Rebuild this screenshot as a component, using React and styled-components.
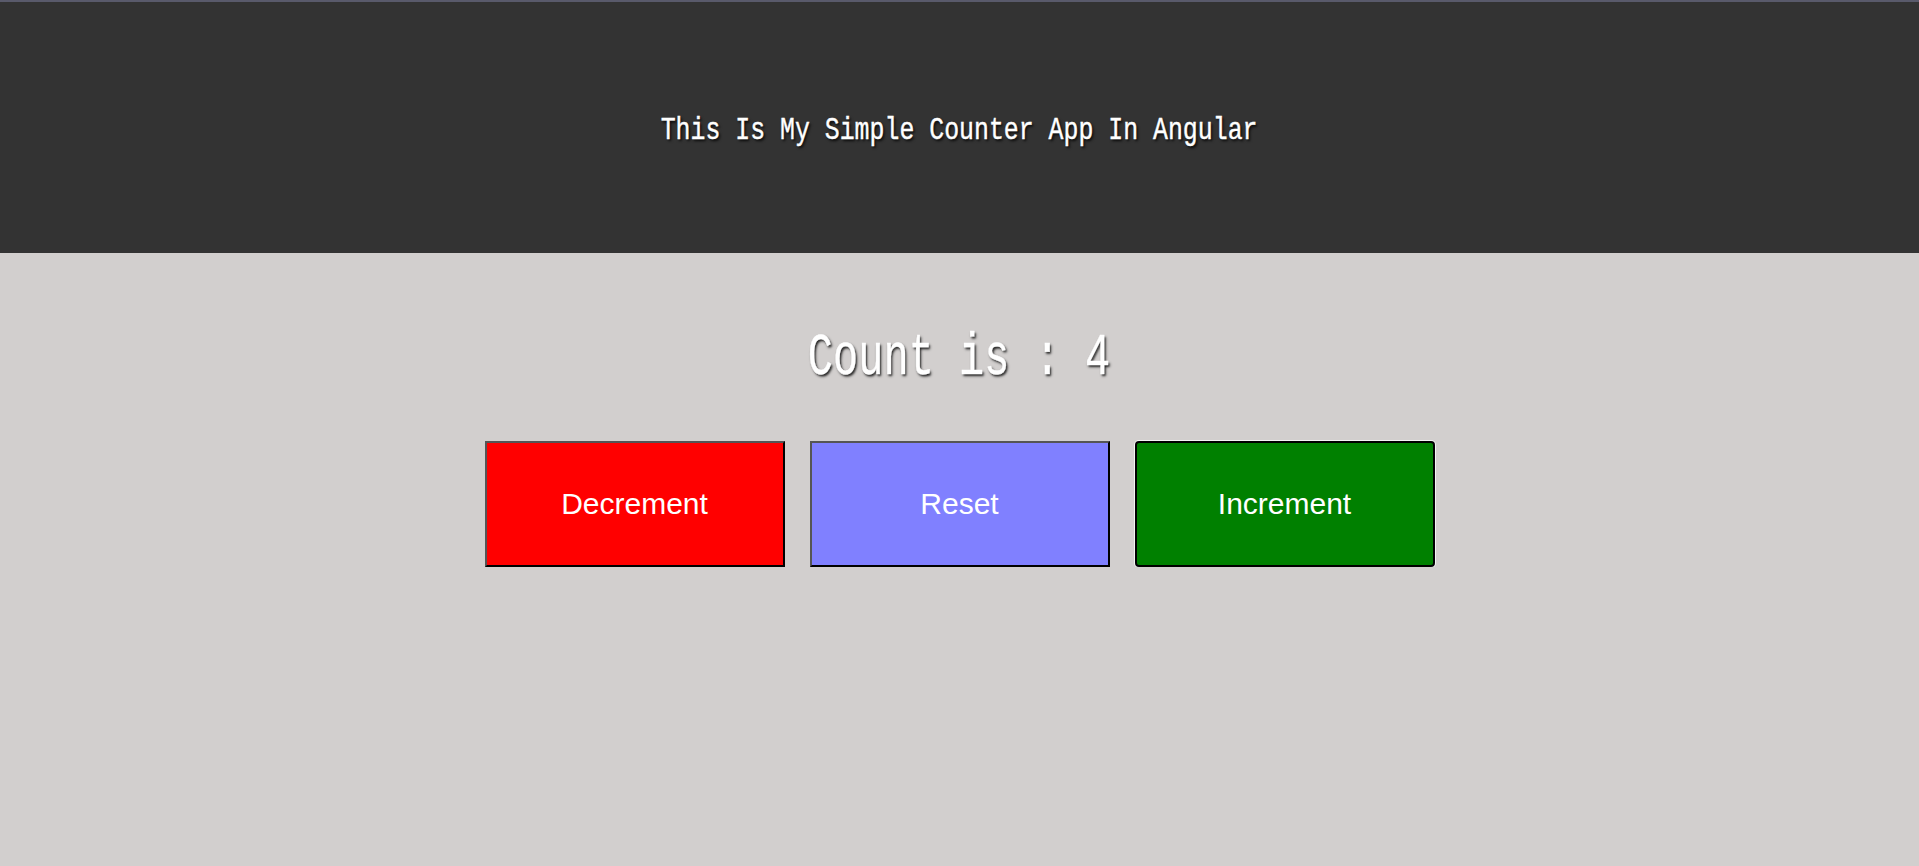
import React, { useState } from 'react'
import styled, { createGlobalStyle } from 'styled-components'

const GlobalStyle = createGlobalStyle`
	html, body {
		margin: 0;
		padding: 0;
		background: #d2cfce;
	}
	body {
		font-family: "Liberation Sans", Arial, sans-serif;
	}
`

const Header = styled.header`
	height: 251px;
	border-top: 2px solid #595a6b;
	background: #333333;
	display: flex;
	align-items: center;
	justify-content: center;
`

// the original font is a narrow mono serif, so squeeze a mono face to its width
const NarrowText = styled.span`
	display: inline-block;
	font-family: "Liberation Mono", "Courier New", monospace;
	color: #ffffff;
	white-space: pre;
	transform: scaleX(${props => props.squeeze});
	-webkit-text-stroke: 0.4px #ffffff;
	text-shadow: 2px 2px 3px rgba(0, 0, 0, 0.85);
`

const Title = styled.h1`
	margin: 0;
	font-size: 32px;
	font-weight: normal;
	line-height: 1;
	padding-top: 4px;
`

const Main = styled.main`
	display: flex;
	flex-direction: column;
	align-items: center;
	padding-top: 71px;
`

const Count = styled.h2`
	margin: 0;
	font-size: 60px;
	font-weight: normal;
	line-height: 1;
`

const ButtonRow = styled.div`
	display: flex;
	gap: 25px;
	margin-top: 53px;
`

const CounterButton = styled.button`
	width: 300px;
	height: 126px;
	background: ${props => props.color};
	color: #ffffff;
	font-family: "Liberation Sans", Arial, sans-serif;
	font-size: 30px;
	border-style: solid;
	border-width: 2px;
	border-color: ${props => (props.focused ? '#000' : '#555 #000 #000 #555')};
	border-radius: ${props => (props.focused ? '4px' : '0')};
	box-shadow: ${props => (props.focused ? '0 0 0 1px #f4f4f4' : 'none')};
	cursor: pointer;
	padding: 0;
`

const App = () => {
	const [count, setCount] = useState(4)

	return (
		<>
			<GlobalStyle />
			<Header>
				<Title>
					<NarrowText squeeze={0.777}>This Is My Simple Counter App In Angular</NarrowText>
				</Title>
			</Header>
			<Main>
				<Count>
					<NarrowText squeeze={0.7}>{`Count is : ${count}`}</NarrowText>
				</Count>
				<ButtonRow>
					<CounterButton color="#ff0000" onClick={() => setCount(count - 1)}>Decrement</CounterButton>
					<CounterButton color="#8080ff" onClick={() => setCount(0)}>Reset</CounterButton>
					<CounterButton color="#008000" focused onClick={() => setCount(count + 1)}>Increment</CounterButton>
				</ButtonRow>
			</Main>
		</>
	)
}

export default App
